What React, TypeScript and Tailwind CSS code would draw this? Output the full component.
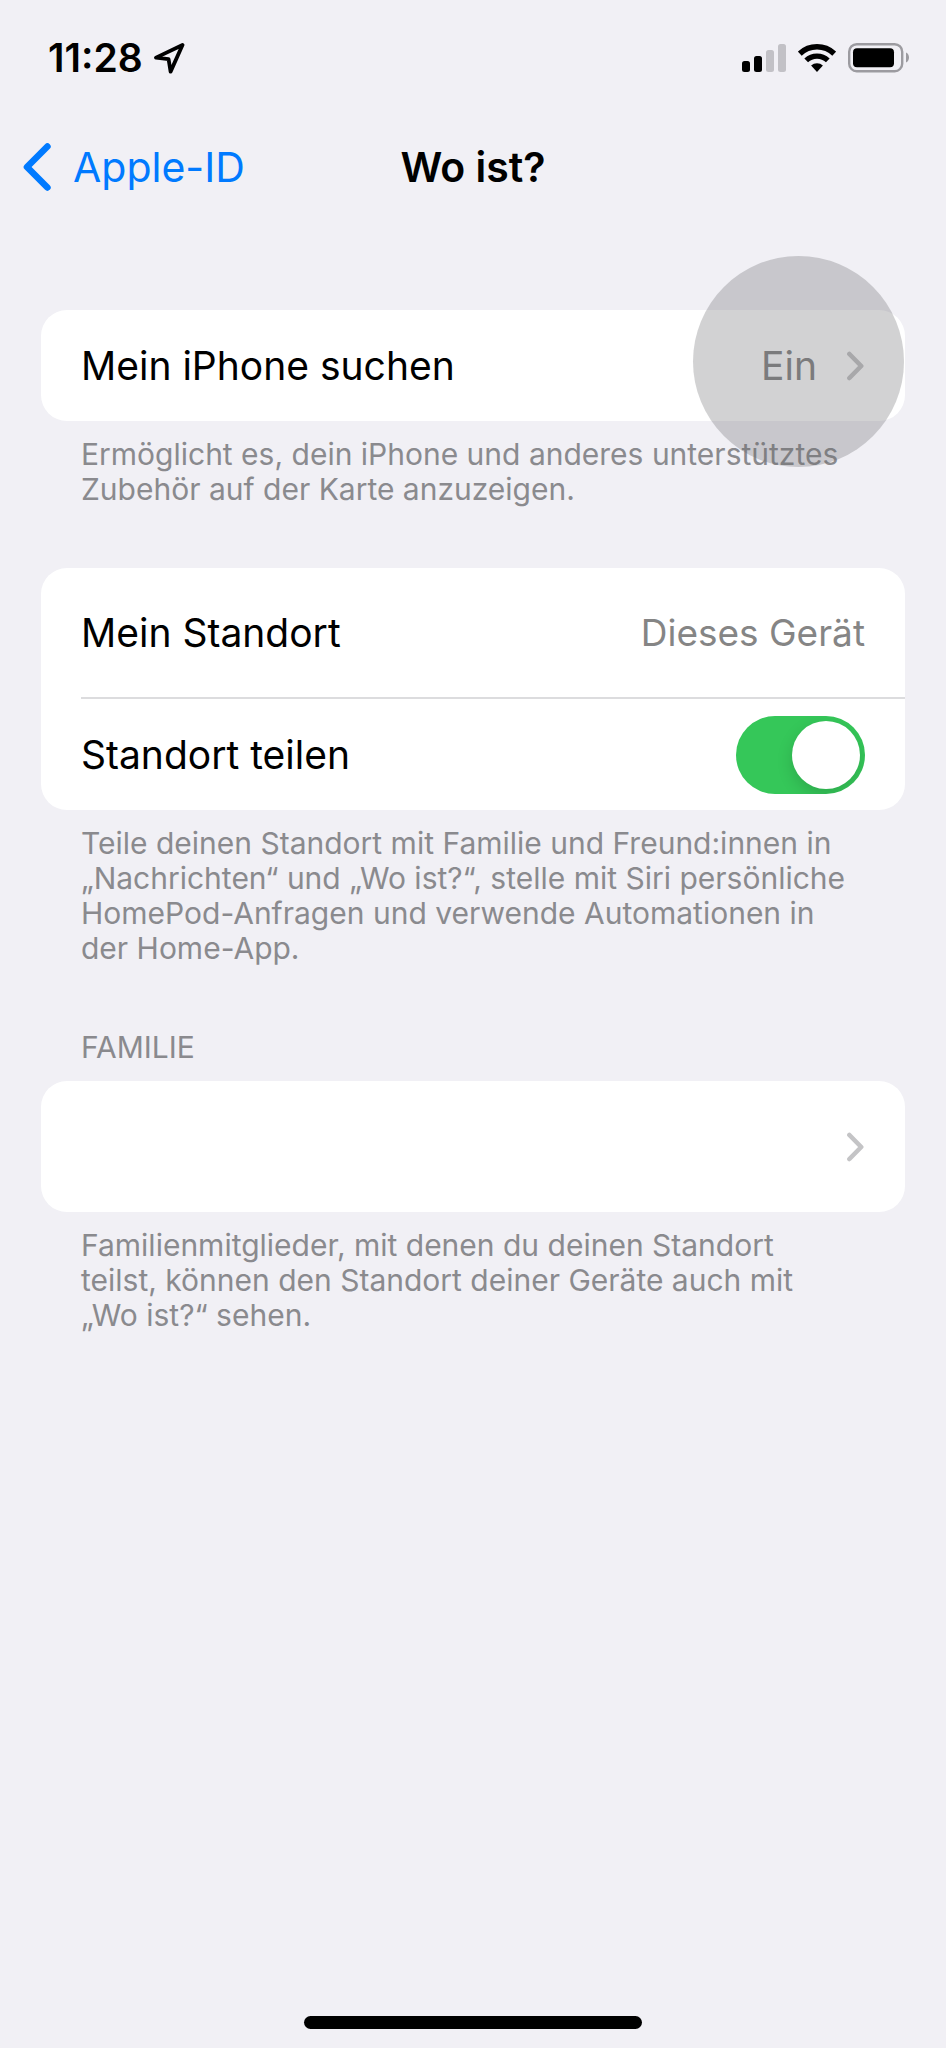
import { useState, type ReactNode } from "react"

function LocationArrow() {
    return (
        <svg width="32" height="32" viewBox="0 0 32 32" fill="none" aria-hidden="true">
            <path
                d="M29.5 3 L3 15.6 L15.6 17.2 L17.6 29.6 Z"
                stroke="#000"
                strokeWidth="3.8"
                strokeLinejoin="round"
            />
        </svg>
    )
}

function Signal() {
    return (
        <svg width="44" height="28" viewBox="0 0 44 28" aria-hidden="true">
            <rect x="0" y="17" width="8" height="11" rx="2.5" fill="#000" />
            <rect x="12" y="12" width="8" height="16" rx="2.5" fill="#000" />
            <rect x="24" y="6" width="8" height="22" rx="2.5" fill="#c2c1c6" />
            <rect x="36" y="0" width="8" height="28" rx="2.5" fill="#c2c1c6" />
        </svg>
    )
}

function Wifi() {
    return (
        <svg width="38" height="28" viewBox="0 0 38 28" fill="none" aria-hidden="true">
            <path d="M1.8 9.6 A25.2 25.2 0 0 1 36.2 9.6" stroke="#000" strokeWidth="5.6" />
            <path d="M8.2 16.4 A15.8 15.8 0 0 1 29.8 16.4" stroke="#000" strokeWidth="5.4" />
            <path d="M19 28 L13.1 21.6 A8.7 8.7 0 0 1 24.9 21.6 Z" fill="#000" />
        </svg>
    )
}

function Battery() {
    return (
        <svg width="62" height="30" viewBox="0 0 62 30" fill="none" aria-hidden="true">
            <rect x="1.2" y="1.2" width="53" height="27" rx="7.5" stroke="#9c9ba0" strokeWidth="2.4" />
            <rect x="5" y="5.2" width="41" height="19" rx="4" fill="#000" />
            <path d="M58 9.5 C62 11 62 18 58 19.5 Z" fill="#9c9ba0" />
        </svg>
    )
}

function Chevron() {
    return (
        <svg width="18" height="30" viewBox="0 0 18 30" fill="none" aria-hidden="true">
            <path
                d="M2.4 3 L14.2 15 L2.4 27"
                stroke="#c4c4c6"
                strokeWidth="4.6"
                strokeLinecap="round"
                strokeLinejoin="round"
            />
        </svg>
    )
}

function Card({ children }: { children: ReactNode }) {
    return <div className="relative rounded-[26px] bg-white">{children}</div>
}

function Note({ children }: { children: ReactNode }) {
    return (
        <p className="mt-4 pr-14 pl-10 text-[30px] leading-[35px] text-[#8a8a8e]">
            {children}
        </p>
    )
}

export default function App() {
    const [sharing, setSharing] = useState(true)

    return (
        <div className="flex min-h-screen flex-col bg-[#f1f0f5] font-[Inter,'Liberation_Sans',sans-serif] text-[39px] leading-[48px] text-black">

            <header>
                <div className="flex h-[116px] items-center justify-between pr-9 pl-12">
                    <div className="flex items-center gap-[10px]">
                        <span className="font-semibold">11:28</span>
                        <LocationArrow />
                    </div>
                    <div className="flex items-center gap-3">
                        <Signal />
                        <Wifi />
                        <Battery />
                    </div>
                </div>

                <nav className="grid h-[102px] grid-cols-[1fr_auto_1fr] items-center px-[23px] text-[41px]">
                    <a href="#apple-id" className="flex items-center gap-[22px] text-[#007aff]">
                        <svg width="28" height="48" viewBox="0 0 28 48" fill="none" aria-hidden="true">
                            <path
                                d="M24.4 3.5 L4 24 L24.4 44.5"
                                stroke="currentColor"
                                strokeWidth="6.6"
                                strokeLinecap="round"
                                strokeLinejoin="round"
                            />
                        </svg>
                        Apple-ID
                    </a>
                    <h1 className="font-semibold">Wo ist?</h1>
                </nav>
            </header>

            <main className="flex-1 px-[41px] pt-[92px]">

                <section>
                    <Card>
                        <button type="button" className="flex h-[111px] w-full items-center justify-between px-10">
                            <span>Mein iPhone suchen</span>
                            <span className="flex items-center gap-[30px] text-[#858585]">
                                Ein
                                <Chevron />
                            </span>
                        </button>
                        {/* tap marker */}
                        <div className="pointer-events-none absolute -top-[54px] right-px z-10 size-[211px] rounded-full bg-[#646467]/29" />
                    </Card>
                    <Note>
                        Ermöglicht es, dein iPhone und anderes unterstütztes Zubehör auf der Karte anzuzeigen.
                    </Note>
                </section>

                <section className="mt-[61px]">
                    <Card>
                        <div className="flex h-[129px] items-center justify-between px-10">
                            <span>Mein Standort</span>
                            <span className="text-[37px] text-[#858585]">Dieses Gerät</span>
                        </div>
                        <div className="ml-10 flex h-[113px] items-center justify-between border-t-2 border-[#dcdcde] pr-10">
                            <label htmlFor="share">Standort teilen</label>
                            <input
                                id="share"
                                type="checkbox"
                                role="switch"
                                checked={sharing}
                                onChange={(e) => setSharing(e.target.checked)}
                                className="flex h-[78px] w-[129px] appearance-none items-center overflow-hidden rounded-full bg-[#e9e9ea] px-[5px] before:size-[68px] before:rounded-full before:bg-white before:shadow-[0_6px_16px_rgba(0,0,0,0.15)] checked:justify-end checked:bg-[#35c759]"
                            />
                        </div>
                    </Card>
                    <Note>
                        Teile deinen Standort mit Familie und Freund:innen in „Nachrichten“ und „Wo ist?“, stelle mit Siri persönliche HomePod-Anfragen und verwende Automationen in der Home-App.
                    </Note>
                </section>

                <section className="mt-16">
                    <h2 className="mb-4 px-10 text-[30px] leading-[35px] text-[#8a8a8e]">FAMILIE</h2>
                    <Card>
                        <button
                            type="button"
                            aria-label="Familienmitglied"
                            className="flex h-[131px] w-full items-center justify-end px-10"
                        >
                            <Chevron />
                        </button>
                    </Card>
                    <Note>
                        Familienmitglieder, mit denen du deinen Standort teilst, können den Standort deiner Geräte auch mit „Wo ist?“ sehen.
                    </Note>
                </section>

            </main>

            <footer className="flex justify-center pb-[19px]">
                <div className="h-[13px] w-[338px] rounded-full bg-black" />
            </footer>

        </div>
    )
}
